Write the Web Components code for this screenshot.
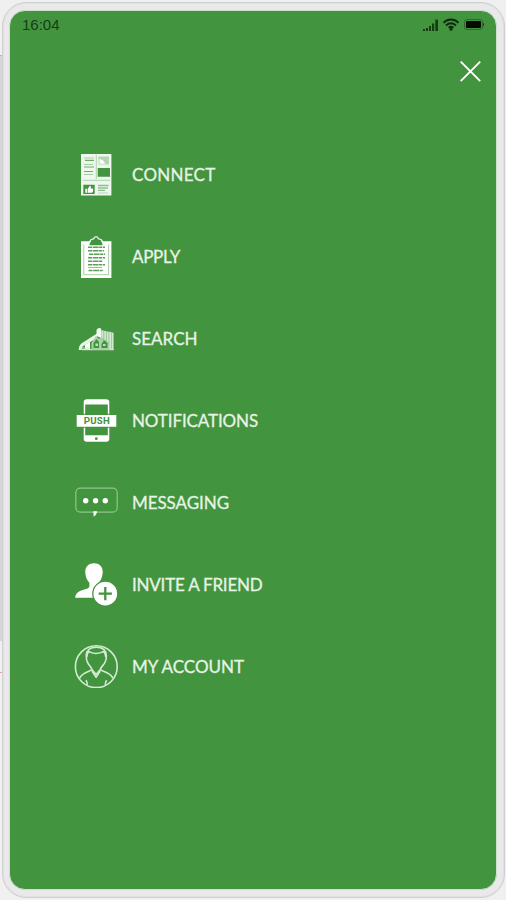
<!DOCTYPE html>
<html lang="en">
<head>
<meta charset="utf-8">
<title>Menu</title>
<style>
  html, body { margin: 0; height: 100%; }
  body { background: #f2f2f2; font-family: Lato, sans-serif; overflow: hidden; }
</style>
</head>
<body>
<phone-frame>
  <status-bar time="16:04"></status-bar>
  <close-button></close-button>
  <nav-menu>
    <menu-item icon="connect" label="CONNECT" width="82.500"></menu-item>
    <menu-item icon="apply" label="APPLY" width="47"></menu-item>
    <menu-item icon="search" label="SEARCH" width="64.500"></menu-item>
    <menu-item icon="push" label="NOTIFICATIONS" width="125"></menu-item>
    <menu-item icon="message" label="MESSAGING" width="96"></menu-item>
    <menu-item icon="invite" label="INVITE A FRIEND" width="129.500"></menu-item>
    <menu-item icon="account" label="MY ACCOUNT" width="111"></menu-item>
  </nav-menu>
</phone-frame>

<script>
// All icons are drawn on a 44x44 grid
const icons = {
  connect: `
    <path fill="#eef7ed" d="M7 2h30.400v41.600H7z"/>
    <path stroke="#a5cca4" d="M10 6h10M10 12.500h9M10 22.500h9M24.500 6h5"/>
    <path stroke="#70ab6e" stroke-width="1.200" d="M11 8.400h9M10 15h10M10 19.500h9"/>
    <path fill="#b3d6b1" d="M24.500 4.500H35v8H24.500z"/>
    <path fill="#fff" d="M25.500 7l3 1 3 3.800h-6z"/>
    <path fill="#43943e" d="M23.700 16H36v8.700H23.700zM9.300 32.700h11.400V42H9.300z"/>
    <path stroke="#9fca9d" stroke-width=".8" d="M9 28.300h27M22.300 3v24"/>
    <path fill="#fff" d="M11.300 36.700h1.800v4h-1.800zM13.700 37l2-3h1.200l-.2 2.600h2.400v2.600l-1 1.500h-4.400z"/>
    <path stroke="#8fc08c" stroke-width="1.300" d="M24 33.500h10.500M24 36h10M24 38.300h7"/>
    <path stroke="#b9d9b7" d="M24 41h10"/>`,
  apply: `
    <path fill="#fff" d="M7 7.300h30.400V44H7z"/>
    <path fill="#43943e" d="M15.500 11.300q0-4 3-4.800h7q3 .8 3 4.800z"/>
    <path stroke="#eef7ed" stroke-width="1.300" d="M15.800 8.400c0-2 1-3 2.800-3.200 1.600-.2 1.400-2.500 3.500-2.500s1.900 2.300 3.500 2.500c1.800.2 2.800 1.200 2.800 3.200"/>
    <path stroke="#9cc99a" stroke-width=".9" d="M9.800 10.500v30.200h24.800V10.500"/>
    <path stroke="#5a9e57" stroke-width="1.400" stroke-dasharray="4 .6 6 .5 3 .7" d="M14 13.300h17M14 16.800h16M15 20.200h16M14 23.700h17M14 27.200h15M14 30.700h17M14.500 36.500h15"/>
    <path stroke="#87b985" stroke-width=".9" d="M14 33.500h14"/>`,
  search: `
    <path fill="#eaf5e9" d="M4.700 34c.2-3 1-5.400 3-6.800L23 17.500V22L8.500 30.500 7.700 34z"/>
    <path fill="#fff" d="M11 29l5-3v8h-5z"/>
    <path stroke="#d2e8d1" stroke-width="1.100" d="M6 32h9M8 33.600h31.700"/>
    <path fill="#acd1aa" d="M17.500 27l4.500-7 3 3 3-3 8 6v8H17.500z"/>
    <path fill="#43943e" d="M19.500 27l3-4 2.500 3v6h-5.500zM27.500 28l2.500-4 3.500 3v5h-6z"/>
    <path fill="#c1dfbf" d="M21.500 27.500h2.500v2.500h-2.500zM29 28h2.500v2H29z"/>
    <path fill="#8cc08a" d="M26 14l13.300 2.300V33h-3.500l-1-6L26 22z"/>
    <path fill="#f3faf2" d="M22.500 14.500c0-1.800 3.500-3.500 4.700-1.500v9l-4.700-2z"/>
    <path stroke="#d3e9d2" stroke-width="1.700" d="M28.500 14.500v8M31.200 15v9M33.700 16v10M36.200 16v17M38.600 17v17"/>`,
  push: `
    <path fill="#fff" fill-rule="evenodd" d="M12.700 1.300h19.600q3 0 3 3v36.400q0 3-3 3H12.700q-3 0-3-3V4.300q0-3 3-3zM11.200 6.500v30.700h22.600V6.500z"/>
    <path fill="#43943e" d="M9 15.800h27v1H9zM9 28.800h27v1H9z"/>
    <path fill="#fff" d="M2.700 17h39.600v11.700H2.700z"/>
    <circle cx="22.300" cy="40.700" r="1.400" fill="#43943e"/>
    <text x="9.700" y="26.200" textLength="26" font-family="Roboto, sans-serif" font-size="9.600" font-weight="700" fill="#43943e">PUSH</text>`,
  message: `
    <rect x="1.800" y="8.200" width="41.400" height="24" rx="4.500" stroke="#8fc58c" stroke-width="1.200"/>
    <g fill="#fff"><circle cx="11.700" cy="20.700" r="2.700"/><circle cx="21.600" cy="20.700" r="2.700"/><circle cx="31.300" cy="20.700" r="2.700"/>
    <path d="M19.300 31.300h3.700q0 3.200-3.300 5.400z"/></g>`,
  invite: `
    <path fill="#fff" d="M20 1.300c6.500 0 9 4.500 8.700 9.500-.3 5-2.400 8.300-4.200 10.200v4.500L20 35.700H1.200c.2-5.700 5.800-7.300 10.800-8.700 2.500-.7 3.400-1.500 3.400-3v-3.200C13 18.500 11.600 15 11.300 10.500 11 5.300 14 1.300 20 1.300z"/>
    <circle cx="31.300" cy="31.700" r="12.500" fill="#fff" stroke="#43943e" stroke-width="1.300"/>
    <path stroke="#43943e" stroke-width="2.300" d="M24.700 31.700h13.200M31.300 25.100v13.200"/>`,
  account: `
    <g stroke="#d4ead3" stroke-width="1.600" stroke-linejoin="round">
    <circle cx="22.300" cy="22.700" r="20.900"/>
    <path d="M12.200 11.500C12.700 5 17 3.300 22.300 3.300S32.300 5.500 32.400 12c0 3-.5 5-1.800 7.200-1.300 2.200-3.900 4-4.300 6.300l-4.200 5-4.200-5c-.4-2.300-2.500-3.800-3.800-6-1.300-2.200-2-4.500-1.900-8z"/>
    <path d="M12.800 13c.2-3 .8-4.500 2-5.600 3.400 2.600 10 2.800 15 0 1.200 1.500 1.800 3 2 5.600"/>
    <path d="M17.900 25.500c-2 2.500-8.200 1.600-12.300 8.500M26.300 25.500c2 2.500 8.800 1.600 12.600 8.500M18 27l4.100 6.300 4.100-6.300M13.300 41.300c.1-2-.3-3.500-1.300-5M31.300 41.300c-.1-2 .3-3.500 1.300-5"/>
    </g>`
};

class PhoneFrame extends HTMLElement {
  constructor() {
    super();
    this.attachShadow({ mode: 'open' });
    this.shadowRoot.innerHTML = `
      <style>
        :host {
          display: block; box-sizing: border-box; width: 506px; height: 900px; padding: 2px 1px 2px 2px;
          background:
            linear-gradient(#e3a3ab, #e3a3ab) 0 55px / 2px 1px no-repeat,
            linear-gradient(#e3a3ab, #e3a3ab) 0 672px / 2px 1px no-repeat,
            linear-gradient(#d6d5d9, #d6d5d9) 0 56px / 2px 585px no-repeat,
            #f0f0f1;
        }
        .case { box-sizing: border-box; height: 896px; padding: 7px 7px 7px 6px; border: 1px solid #d0d0d1; border-radius: 24px; background: #e9e8eb; box-shadow: inset 0 0 0 1px #e0e0e1; }
        .screen { box-sizing: border-box; height: 880px; border: 1px solid #cce0cb; border-radius: 16px; background: #43943e; overflow: hidden; display: flex; flex-direction: column; }
      </style>
      <div class="case"><div class="screen"><slot></slot></div></div>
    `;
  }
}

class StatusBar extends HTMLElement {
  connectedCallback() {
    this.attachShadow({ mode: 'open' });
    this.shadowRoot.innerHTML = `
      <style>
        :host { display: flex; justify-content: space-between; height: 27px; padding: 0 10px 0 12px; align-items: center; }
        span { font: 15px/18px "Liberation Sans", sans-serif; color: #173d15; }
        svg { display: block; }
      </style>
      <span>${this.getAttribute('time')}</span>
      <svg width="64" height="16" viewBox="0 0 64 16" fill="none">
        <path fill="#173d15" d="M1 12h2v2H1zM4 11h2v3H4zM7 9h2v5H7zM10 6.500h2.200V14H10zM13.300 2.500H16V14h-2.700z"/>
        <path stroke="#0e2a0d" stroke-width="1.900" d="M21.500 5.700c4.500-4.300 10.500-4.300 15 0M24 8.500c3.200-2.800 6.800-2.800 10 0M26.600 10.800c1.500-1.200 3.300-1.200 4.800 0"/>
        <circle cx="29" cy="12.300" r="1.500" fill="#0e2a0d"/>
        <rect x="42.500" y="2.500" width="18" height="10" rx="2.500" stroke="#2c692a" stroke-width="1"/>
        <rect x="44" y="4" width="15" height="7" rx="1" fill="#050a05"/>
        <path fill="#173d15" d="M61 5.500q2 2 0 4z"/>
      </svg>
    `;
  }
}

class CloseButton extends HTMLElement {
  constructor() {
    super();
    this.attachShadow({ mode: 'open' });
    this.shadowRoot.innerHTML = `
      <style>
        :host { display: flex; justify-content: flex-end; padding: 22px 14px 0 0; }
        svg { display: block; }
      </style>
      <svg width="22" height="22" viewBox="0 0 22 22"><path stroke="#fff" stroke-width="1.900" d="M.7 1.700l19.500 19.500M20.200 1.700L.7 21.200"/></svg>
    `;
  }
}

class NavMenu extends HTMLElement {
  constructor() {
    super();
    this.attachShadow({ mode: 'open' });
    this.shadowRoot.innerHTML = `
      <style>
        :host { display: flex; flex-direction: column; gap: 38px; padding: 70px 0 0 64px; }
      </style>
      <slot></slot>
    `;
  }
}

class MenuItem extends HTMLElement {
  connectedCallback() {
    this.attachShadow({ mode: 'open' });
    this.render();
  }

  render() {
    const label = this.getAttribute('label');
    this.shadowRoot.innerHTML = `
      <style>
        :host { display: flex; align-items: center; height: 44px; gap: 14px; }
        svg { display: block; flex: none; }
        span { padding-top: 1px; font: 17px/22px Lato, sans-serif; color: #e6f3e5; -webkit-text-stroke: .3px #e6f3e5; white-space: nowrap; }
      </style>
      <svg width="44" height="44" viewBox="0 0 44 44" fill="none">${icons[this.getAttribute('icon')]}</svg>
      <span>${label}</span>
    `;
    // Track the label out (or in) to its set width
    const span = this.shadowRoot.querySelector('span');
    const natural = span.getBoundingClientRect().width;
    const spacing = (Number(this.getAttribute('width')) + 1 - natural) / label.length;
    span.style.letterSpacing = `${spacing}px`;
  }
}

customElements.define('phone-frame', PhoneFrame);
customElements.define('status-bar', StatusBar);
customElements.define('close-button', CloseButton);
customElements.define('nav-menu', NavMenu);
customElements.define('menu-item', MenuItem);
</script>
</body>
</html>
